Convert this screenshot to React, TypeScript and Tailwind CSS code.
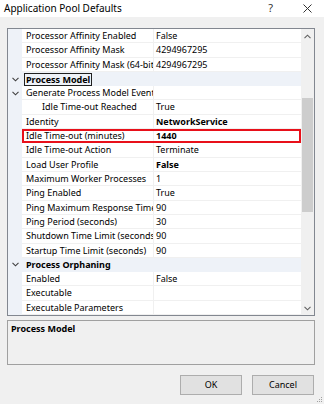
import React from 'react';

type Row =
  | { kind: 'cat'; label: string; focus?: boolean }
  | { kind: 'prop'; label: string; value?: string; bold?: boolean; indent?: boolean; expand?: boolean; mark?: boolean };

const rows: Row[] = [
  { kind: 'prop', label: 'Processor Affinity Enabled', value: 'False' },
  { kind: 'prop', label: 'Processor Affinity Mask', value: '4294967295' },
  { kind: 'prop', label: 'Processor Affinity Mask (64-bit option)', value: '4294967295' },
  { kind: 'cat', label: 'Process Model', focus: true },
  { kind: 'prop', label: 'Generate Process Model Event Log Entry', expand: true },
  { kind: 'prop', label: 'Idle Time-out Reached', value: 'True', indent: true },
  { kind: 'prop', label: 'Identity', value: 'NetworkService', bold: true },
  { kind: 'prop', label: 'Idle Time-out (minutes)', value: '1440', bold: true, mark: true },
  { kind: 'prop', label: 'Idle Time-out Action', value: 'Terminate' },
  { kind: 'prop', label: 'Load User Profile', value: 'False', bold: true },
  { kind: 'prop', label: 'Maximum Worker Processes', value: '1' },
  { kind: 'prop', label: 'Ping Enabled', value: 'True' },
  { kind: 'prop', label: 'Ping Maximum Response Time (seconds)', value: '90' },
  { kind: 'prop', label: 'Ping Period (seconds)', value: '30' },
  { kind: 'prop', label: 'Shutdown Time Limit (seconds)', value: '90' },
  { kind: 'prop', label: 'Startup Time Limit (seconds)', value: '90' },
  { kind: 'cat', label: 'Process Orphaning' },
  { kind: 'prop', label: 'Enabled', value: 'False' },
  { kind: 'prop', label: 'Executable', value: '' },
  { kind: 'prop', label: 'Executable Parameters', value: '' },
];

function Chevron({ up = false, className = '' }: { up?: boolean; className?: string }) {
  return (
    <svg width="7" height="5" viewBox="0 0 7 5" className={className}>
      <path d={up ? 'M0.5 4.2 L3.5 1.2 L6.5 4.2' : 'M0.5 0.8 L3.5 3.8 L6.5 0.8'} fill="none" stroke="currentColor" strokeWidth="1.1" />
    </svg>
  );
}

function GridRow({ row }: { row: Row }) {
  if (row.kind === 'cat') {
    return (
      <div className="flex h-[14.33px] items-center bg-[#eef2f8]">
        <div className="flex w-[14px] shrink-0 justify-center text-[#404040]">
          <Chevron />
        </div>
        <span
          className={`ml-[2px] border px-[1px] leading-[11px] font-bold ${row.focus ? 'border-[#202020]' : 'border-transparent'}`}
        >
          {row.label}
        </span>
      </div>
    );
  }
  return (
    <div className="relative flex h-[14.33px] items-center">
      <div className="flex h-full w-[14px] shrink-0 items-center justify-center bg-[#eef2f8] text-[#404040]">
        {row.expand && <Chevron />}
      </div>
      <div
        className={`h-full w-[132px] shrink-0 overflow-hidden whitespace-nowrap border-r border-b border-[#f0f0f0] leading-[14px] ${
          row.indent ? 'pl-[20px]' : 'pl-[4px]'
        }`}
      >
        {row.label}
      </div>
      <div className={`h-full flex-1 overflow-hidden whitespace-nowrap border-b border-[#f0f0f0] pl-[2px] leading-[14px] ${row.bold ? 'font-bold' : ''}`}>
        {row.value}
      </div>
      {row.mark && <div className="absolute inset-y-0 left-[14px] right-0 border-2 border-[#e8101a]" />}
    </div>
  );
}

export default function App() {
  return (
    <div
      className="relative flex h-[404px] w-[324px] flex-col bg-[#f0f0f0] text-[9px] text-black"
      style={{ fontFamily: '"Noto Sans", "Open Sans", sans-serif' }}
    >
      <div className="flex h-[17px] items-center bg-white pl-[4px] pr-[12px]">
        <span className="flex-1 text-[10px]">Application Pool Defaults</span>
        <span className="mr-[30px] text-[11px] text-[#333]">?</span>
        <svg width="9" height="9" viewBox="0 0 9 9" className="text-[#333]">
          <path d="M0.5 0.5 L8.5 8.5 M8.5 0.5 L0.5 8.5" stroke="currentColor" strokeWidth="1" />
        </svg>
      </div>

      <div className="mt-[11px] ml-[7px] flex h-[288px] w-[308px] border border-[#828790] bg-white">
        <div className="flex flex-1 flex-col">
          {rows.map((r, i) => (
            <GridRow key={i} row={r} />
          ))}
        </div>
        <div className="flex w-[13px] flex-col items-center bg-[#f0f0f0] text-[#606060]">
          <div className="flex h-[14px] items-center">
            <Chevron up />
          </div>
          <div className="flex-1 w-full px-[1px]">
            <div className="mt-[55px] h-[114px] w-full bg-[#cdcdcd]" />
          </div>
          <div className="flex h-[14px] items-center">
            <Chevron />
          </div>
        </div>
      </div>

      <div className="mt-[4px] ml-[7px] h-[45px] w-[308px] border border-[#a0a0a0] bg-[#f0f0f0] pl-[3px] pt-[1px]">
        <span className="font-bold">Process Model</span>
      </div>

      <div className="mt-[10px] flex justify-end gap-[10px] pr-[10px]">
        <button className="h-[20px] w-[62px] border border-[#adadad] bg-[#e1e1e1]">OK</button>
        <button className="h-[20px] w-[62px] border border-[#adadad] bg-[#e1e1e1]">Cancel</button>
      </div>

      <div className="absolute right-[2px] bottom-[2px] grid grid-cols-3 gap-[1px]">
        {[0, 0, 1, 0, 1, 1, 1, 1, 1].map((v, i) => (
          <div key={i} className={`h-[1px] w-[1px] ${v ? 'bg-[#a0a0a0]' : ''}`} />
        ))}
      </div>
    </div>
  );
}
